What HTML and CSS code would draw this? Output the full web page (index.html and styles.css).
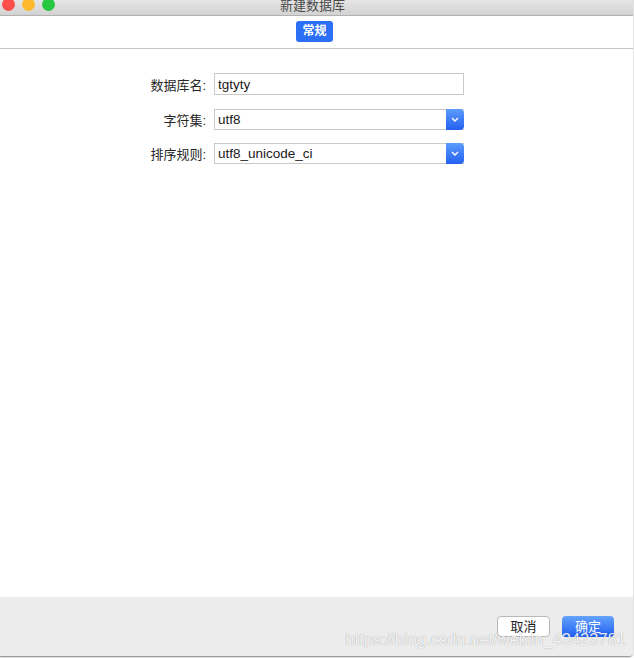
FILE: index.html
```html
<!DOCTYPE html>
<html lang="zh-CN">
<head>
<meta charset="utf-8">
<title>新建数据库</title>
<link rel="stylesheet" href="styles.css">
</head>
<body>
<div class="window">
  <div class="titlebar">
    <div class="lights">
      <span class="light red"></span>
      <span class="light yellow"></span>
      <span class="light green"></span>
    </div>
    <div class="title">新建数据库</div>
    <div class="spacer"></div>
  </div>
  <div class="tabs">
    <button class="tab active">常规</button>
  </div>
  <div class="content">
    <div class="form">
      <label class="label">数据库名:</label>
      <div class="field input">tgtyty</div>
      <label class="label">字符集:</label>
      <div class="field select"><span class="value">utf8</span><span class="arrow"><svg width="8" height="5" viewBox="0 0 8 5"><path d="M1 1 L4 4 L7 1" fill="none" stroke="#fff" stroke-width="1.4"/></svg></span></div>
      <label class="label">排序规则:</label>
      <div class="field select"><span class="value">utf8_unicode_ci</span><span class="arrow"><svg width="8" height="5" viewBox="0 0 8 5"><path d="M1 1 L4 4 L7 1" fill="none" stroke="#fff" stroke-width="1.4"/></svg></span></div>
    </div>
  </div>
  <div class="footer">
    <button class="btn">取消</button>
    <button class="btn primary">确定</button>
    <div class="watermark">https://blog.csdn.net/weixin_43423781</div>
  </div>
</div>
</body>
</html>
```

FILE: styles.css
```css
html, body {
  margin: 0;
  padding: 0;
  background: #ffffff;
}
body {
  width: 634px;
  height: 658px;
  overflow: hidden;
  font-family: "Liberation Sans", "Noto Sans CJK SC", sans-serif;
  font-size: 13px;
  color: #1e1e1e;
}
.window {
  width: 633px;
  height: 656px;
  display: flex;
  flex-direction: column;
  border-right: 1px solid #e4e4e4;
  border-bottom: 1px solid #9c9c9c;
  border-bottom-right-radius: 5px;
  overflow: hidden;
  box-shadow: 0 1px 1px rgba(0,0,0,0.15);
}
.titlebar {
  height: 15px;
  flex: none;
  display: grid;
  grid-template-columns: 1fr auto 1fr;
  align-items: start;
  background: linear-gradient(#e6e6e6, #d2d2d2);
  border-bottom: 1px solid #b2b2b2;
  overflow: hidden;
  padding-right: 8px;
}
.lights {
  display: flex;
  gap: 7px;
  margin-top: -2px;
  margin-left: 2px;
}
.light {
  width: 13px;
  height: 13px;
  border-radius: 50%;
  display: block;
}
.red { background: #fd4f4c; }
.yellow { background: #fdba2f; }
.green { background: #27c73f; }
.title {
  font-size: 13px;
  line-height: 11px;
  color: #4a4a4a;
}
.tabs {
  height: 33px;
  flex: none;
  display: flex;
  justify-content: center;
  align-items: flex-start;
  padding-top: 5px;
  box-sizing: border-box;
  border-bottom: 1px solid #c3c3c3;
  padding-left: 0;
  padding-right: 4px;
}
.tab {
  width: 37px;
  height: 21px;
  border: none;
  border-radius: 3px;
  background: #2b6ff6;
  color: #ffffff;
  font-family: "Liberation Sans", "Noto Sans CJK SC", sans-serif;
  font-size: 12px;
  font-weight: bold;
  padding: 0;
  line-height: 21px;
}
.content {
  flex: 1;
  background: #ffffff;
}
.form {
  display: grid;
  grid-template-columns: 206px 250px;
  column-gap: 8px;
  row-gap: 13px;
  padding-top: 24px;
  align-items: center;
}
.label {
  text-align: right;
  font-size: 13px;
  color: #262626;
}
.field {
  box-sizing: border-box;
  height: 21px;
  border: 1px solid #c9c9c9;
  background: #ffffff;
  font-size: 13.5px;
  line-height: 20px;
  padding-left: 3px;
  color: #1a1a1a;
}
.input {
  height: 22px;
  line-height: 21px;
  margin-bottom: 1px;
}
.select {
  display: flex;
  align-items: stretch;
  padding-right: 0;
  border-right: none;
}
.select .value {
  flex: 1;
}
.arrow {
  width: 18px;
  margin-top: -1px;
  margin-bottom: -1px;
  border-radius: 0 4px 4px 0;
  background: linear-gradient(#5d9cfb, #2360f1);
  display: flex;
  align-items: center;
  justify-content: center;
}
.footer {
  position: relative;
  height: 59px;
  flex: none;
  background: #ececec;
  display: flex;
  justify-content: flex-end;
  align-items: flex-start;
  gap: 12px;
  padding-top: 19px;
  padding-right: 19px;
  box-sizing: border-box;
}
.btn {
  width: 53px;
  height: 21px;
  box-sizing: border-box;
  border: 1px solid #b9b9b9;
  border-radius: 4px;
  background: #ffffff;
  font-family: "Liberation Sans", "Noto Sans CJK SC", sans-serif;
  font-size: 13px;
  color: #1e1e1e;
  padding: 0;
  line-height: 19px;
}
.btn.primary {
  width: 52px;
  border: none;
  background: linear-gradient(#65a3fc, #1f5ef2);
  color: #ffffff;
  line-height: 21px;
}
.watermark {
  position: absolute;
  right: 7px;
  top: 33px;
  font-family: "Liberation Sans", sans-serif;
  font-size: 16.5px;
  color: rgba(255, 255, 255, 0.9);
  text-shadow: 0 0 1px rgba(0, 0, 0, 0.4);
  white-space: nowrap;
  pointer-events: none;
}
```
